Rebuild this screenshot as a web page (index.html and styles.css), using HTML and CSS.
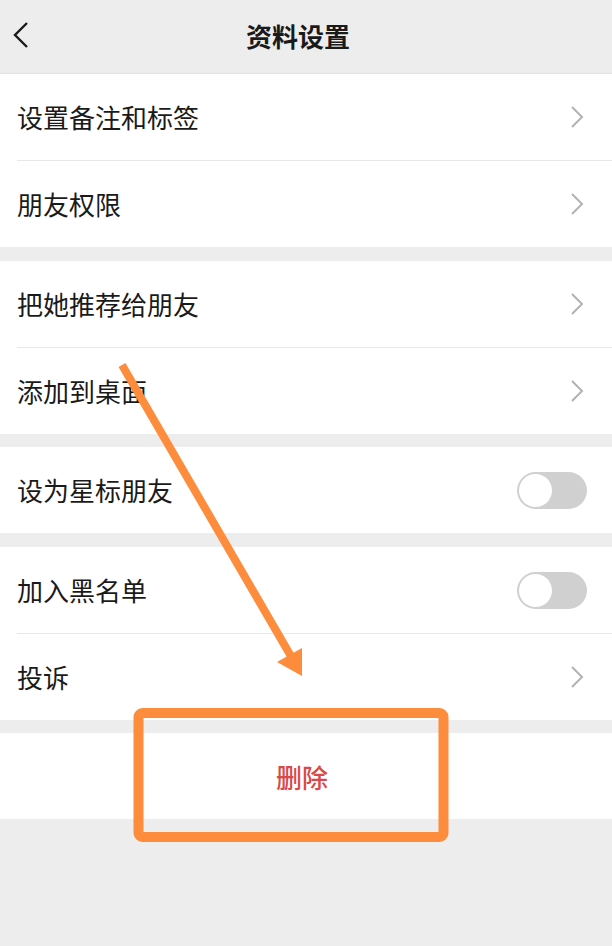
FILE: index.html
```html
<!DOCTYPE html>
<html lang="zh-CN">
<head>
<meta charset="utf-8">
<title>资料设置</title>
<link rel="stylesheet" href="styles.css">
</head>
<body>
<div class="page">
  <header class="nav">
    <svg class="back" width="20" height="30" viewBox="0 0 20 30"><polyline points="15,2 3,14 15,26" fill="none" stroke="#1a1a1a" stroke-width="2.4" stroke-linejoin="miter"/></svg>
    <h1 class="title">资料设置</h1>
  </header>

  <section class="group g1">
    <div class="row"><span class="label">设置备注和标签</span><svg class="chev" width="14" height="22" viewBox="0 0 14 22"><polyline points="2,1 12,11 2,21" fill="none" stroke="#b2b2b2" stroke-width="2"/></svg></div>
    <div class="row"><span class="label">朋友权限</span><svg class="chev" width="14" height="22" viewBox="0 0 14 22"><polyline points="2,1 12,11 2,21" fill="none" stroke="#b2b2b2" stroke-width="2"/></svg></div>
  </section>

  <section class="group g2">
    <div class="row"><span class="label">把她推荐给朋友</span><svg class="chev" width="14" height="22" viewBox="0 0 14 22"><polyline points="2,1 12,11 2,21" fill="none" stroke="#b2b2b2" stroke-width="2"/></svg></div>
    <div class="row"><span class="label">添加到桌面</span><svg class="chev" width="14" height="22" viewBox="0 0 14 22"><polyline points="2,1 12,11 2,21" fill="none" stroke="#b2b2b2" stroke-width="2"/></svg></div>
  </section>

  <section class="group g3">
    <div class="row"><span class="label">设为星标朋友</span><span class="switch"><span class="knob"></span></span></div>
  </section>

  <section class="group g4">
    <div class="row"><span class="label">加入黑名单</span><span class="switch"><span class="knob"></span></span></div>
    <div class="row"><span class="label">投诉</span><svg class="chev" width="14" height="22" viewBox="0 0 14 22"><polyline points="2,1 12,11 2,21" fill="none" stroke="#b2b2b2" stroke-width="2"/></svg></div>
  </section>

  <section class="group g5">
    <div class="row delete">删除</div>
  </section>

  <svg class="annot" width="612" height="946" viewBox="0 0 612 946">
    <line x1="122" y1="365" x2="292" y2="658" stroke="#fd8c3c" stroke-width="8"/>
    <polygon points="302,676 277,662 302,648" fill="#fd8c3c"/>
    <rect x="138.5" y="713" width="305" height="124" rx="4" ry="4" fill="none" stroke="#fd8c3c" stroke-width="10"/>
  </svg>
</div>
</body>
</html>
```

FILE: styles.css
```css
html, body {
  margin: 0;
  padding: 0;
  background: #ededed;
}
body {
  font-family: "Noto Sans CJK SC", "Noto Sans", sans-serif;
  color: #1a1a1a;
}
.page {
  position: relative;
  width: 612px;
  height: 946px;
  overflow: hidden;
  background: #ededed;
}
.nav {
  height: 73px;
  display: flex;
  align-items: center;
  position: relative;
  border-bottom: 1px solid #e2e2e2;
  box-sizing: content-box;
}
.back {
  margin-left: 12px;
  margin-top: -2px;
  flex: none;
}
.title {
  position: absolute;
  left: 0;
  right: 16px;
  top: 0;
  margin: 0;
  height: 73px;
  line-height: 72px;
  text-align: center;
  font-size: 26px;
  font-weight: 700;
  color: #1a1a1a;
}
.group {
  background: #ffffff;
}
.g2, .g4 { margin-top: 14px; }
.g3, .g5 { margin-top: 13px; }
.row {
  height: 86px;
  display: flex;
  align-items: center;
  justify-content: space-between;
  padding: 0 24px 0 17px;
  position: relative;
}
.row + .row {
  border-top: 1px solid transparent;
}
.row + .row::before {
  content: "";
  position: absolute;
  left: 17px;
  right: 0;
  top: -1px;
  height: 1px;
  background: #e8e8e8;
}
.label {
  font-size: 26px;
  line-height: 30px;
  color: #1a1a1a;
}
.chev {
  flex: none;
  margin-right: 4px;
}
.switch {
  width: 70px;
  height: 37px;
  border-radius: 19px;
  background: #d0d0d0;
  display: flex;
  align-items: center;
  padding-left: 2px;
  box-sizing: border-box;
  margin-right: 1px;
}
.knob {
  width: 33px;
  height: 33px;
  border-radius: 50%;
  background: #ffffff;
}
.delete {
  justify-content: center;
  padding: 0 8px 0 0;
  font-size: 26px;
  font-weight: 500;
  color: #d9484a;
}
.annot {
  position: absolute;
  left: 0;
  top: 0;
  pointer-events: none;
}
```
